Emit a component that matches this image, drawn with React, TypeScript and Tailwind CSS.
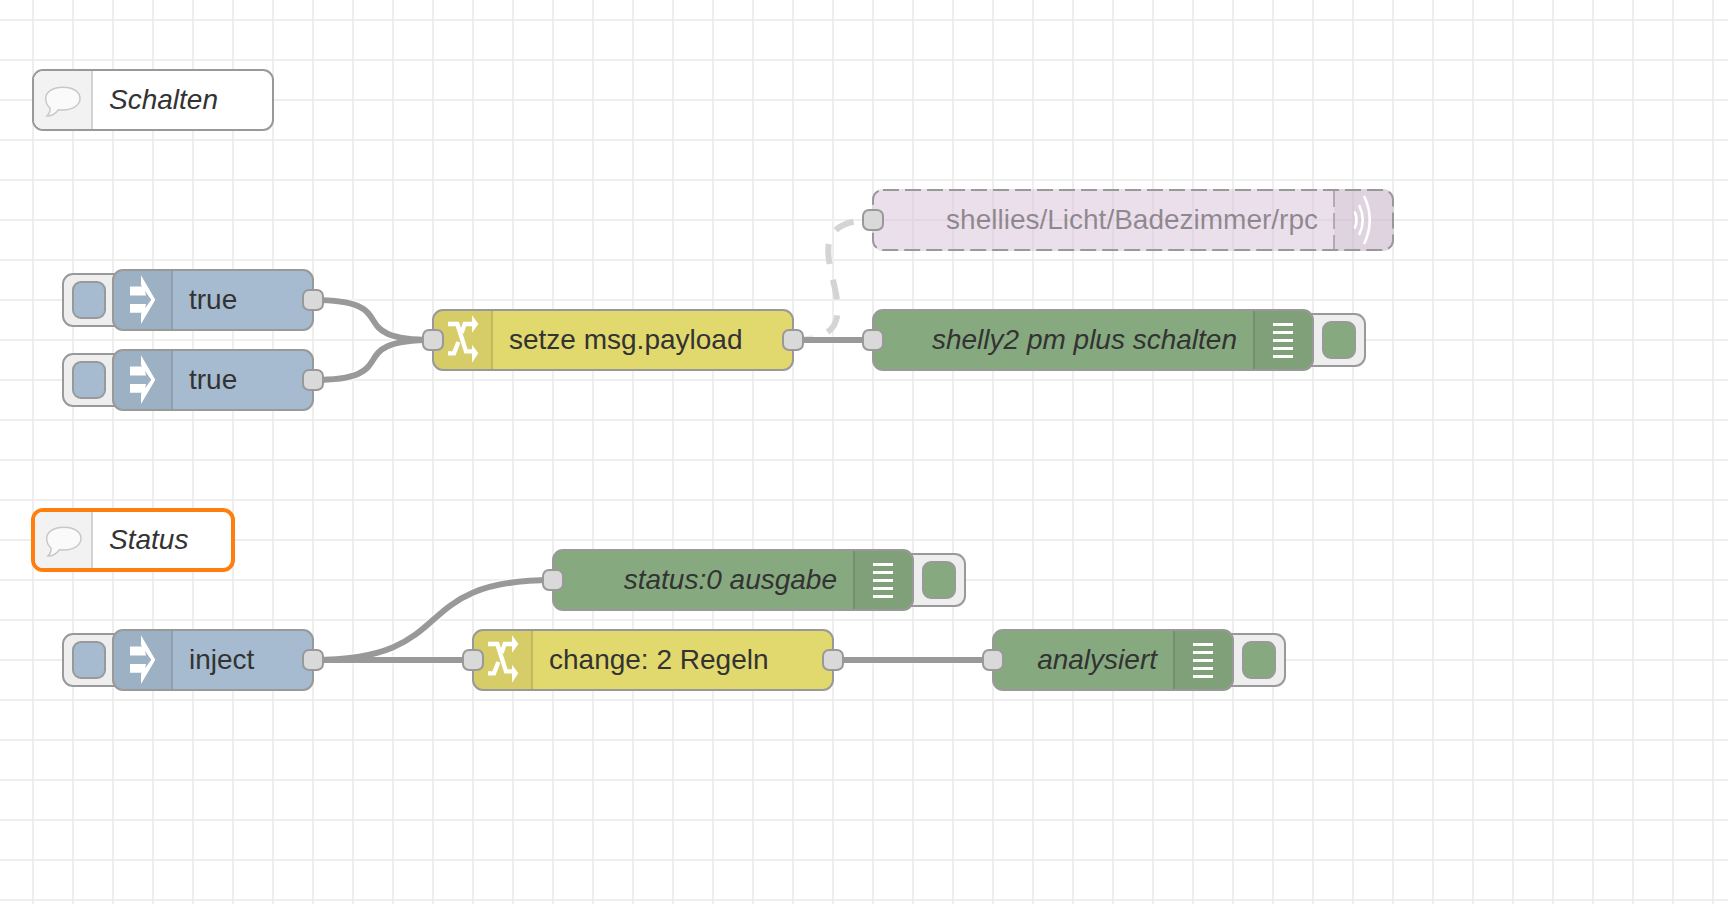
import React from "react";

function Port({ side }: { side: "left" | "right" }) {
  return (
    <div
      className={
        "absolute top-[18px] h-[22px] w-[22px] rounded-[7px] border-2 border-[#999] bg-[#d9d9d9] " +
        (side === "left" ? "left-[-12px]" : "right-[-12px]")
      }
    />
  );
}

function InjectIcon() {
  return (
    <svg viewBox="0 0 57 58" className="h-[58px] w-[57px] shrink-0" fill="#fff">
      <polygon points="27,4.3 41.3,28.7 27,53 27,42.7 37.3,28.7 27,14.3" />
      <polygon points="16,15.5 30,15.5 32,24.5 16,24.5" />
      <polygon points="16,33 32,33 30,41.7 16,41.7" />
    </svg>
  );
}

function ChangeIcon() {
  return (
    <svg viewBox="-24 -3 171 174" className="h-[58px] w-[57px] shrink-0" fill="none" stroke="#fff" strokeWidth="13">
      <path d="M18 36 H46 L72 118 H92" />
      <path d="M18 124 H36 L49 90" />
      <path d="M59 62 L68 36 H92" />
      <polygon points="90,10 109,36 90,62" fill="#fff" stroke="none" />
      <polygon points="90,98 109,124 90,152" fill="#fff" stroke="none" />
    </svg>
  );
}

function CommentIcon() {
  return (
    <svg viewBox="0 0 57 58" className="h-[58px] w-[57px] shrink-0" fill="#fafafa" stroke="#c8c8c8" strokeWidth="1.5">
      <path d="M16 37 C13.5 35 11.7 31 11.7 27.6 C11.7 21 19 16.3 29 16.3 C39 16.3 46 21 46 27.6 C46 34 39 39 29 39 C27.5 39 26 39 24.5 38.7 C22 42 18 45 13 45 C15 43 16.5 40 16 37 Z" />
    </svg>
  );
}

function DebugIcon() {
  return (
    <div className="mr-[1px] flex w-[20px] flex-col gap-[5px]">
      <div className="h-[3px] bg-white" />
      <div className="h-[3px] bg-white" />
      <div className="h-[3px] bg-white" />
      <div className="h-[3px] bg-white" />
      <div className="h-[3px] bg-white" />
    </div>
  );
}

function Comment({ className, label, selected }: { className: string; label: string; selected?: boolean }) {
  return (
    <div
      className={
        "absolute flex items-center bg-white italic " +
        (selected ? "rounded-[12px] border-4 border-[#ff7f0e] " : "rounded-[11px] border-2 border-[#999] ") +
        className
      }
    >
      <div
        className={
          "flex h-full items-center justify-center border-r-2 border-[#d2d2d2] bg-[#f2f2f2] " +
          (selected ? "w-[58px] rounded-l-[8px]" : "w-[59px] rounded-l-[9px]")
        }
      >
        <CommentIcon />
      </div>
      <span className="pl-[16px] text-[28px] leading-none whitespace-nowrap text-[#333]">{label}</span>
    </div>
  );
}

function LeftNode({ className, fill, icon, label, input }: { className: string; fill: string; icon: React.ReactNode; label: string; input?: boolean }) {
  return (
    <div className={"absolute flex items-center rounded-[11px] border-2 border-[#999] " + fill + " " + className}>
      <div className="flex h-full w-[59px] items-center justify-center rounded-l-[9px] border-r-2 border-black/10 bg-black/5">
        {icon}
      </div>
      <span className="pl-[16px] text-[28px] leading-none whitespace-nowrap text-[#333]">{label}</span>
      {input && <Port side="left" />}
      <Port side="right" />
    </div>
  );
}

function DebugNode({ className, label }: { className: string; label: string }) {
  return (
    <div className={"absolute flex items-center justify-end rounded-[11px] border-2 border-[#999] bg-[#87a980] " + className}>
      <span className="pr-[16px] text-[28px] leading-none whitespace-nowrap text-[#333] italic">{label}</span>
      <div className="flex h-full w-[59px] items-center justify-center rounded-r-[9px] border-l-2 border-black/10 bg-black/5">
        <DebugIcon />
      </div>
      <Port side="left" />
    </div>
  );
}

function Button({ outer, inner, fill }: { outer: string; inner: string; fill: string }) {
  return (
    <>
      <div className={"absolute rounded-[11px] border-2 border-[#999] bg-[#eee] " + outer} />
      <div className={"absolute rounded-[9px] border-2 border-[#999] " + fill + " " + inner} />
    </>
  );
}

export default function App() {
  return (
    <div className="relative h-[904px] w-[1728px] overflow-hidden bg-white bg-[linear-gradient(#eee_2px,transparent_2px),linear-gradient(90deg,#eee_2px,transparent_2px)] bg-[size:40px_40px] bg-[position:32px_19px] font-['Liberation_Sans',Arial,sans-serif]">
      {/* wires */}
      <svg viewBox="0 0 1728 904" className="absolute top-0 left-0 h-[904px] w-[1728px]" fill="none">
        <path d="M793 340 C901 340 765 220 873 220" stroke="#d4d4d4" strokeWidth="6" strokeDasharray="20 16" />
        <g stroke="#fff" strokeOpacity="0.4" strokeWidth="10">
          <path d="M313 300 C408 300 338 340 433 340" />
          <path d="M313 380 C408 380 338 340 433 340" />
          <path d="M793 340 H873" />
          <path d="M313 660 C463 660 403 580 553 580" />
          <path d="M313 660 H473" />
          <path d="M833 660 H993" />
        </g>
        <g stroke="#999" strokeWidth="6">
          <path d="M313 300 C408 300 338 340 433 340" />
          <path d="M313 380 C408 380 338 340 433 340" />
          <path d="M793 340 H873" />
          <path d="M313 660 C463 660 403 580 553 580" />
          <path d="M313 660 H473" />
          <path d="M833 660 H993" />
        </g>
      </svg>

      <Comment className="left-[32px] top-[69px] h-[62px] w-[242px]" label="Schalten" />
      <Comment className="left-[31px] top-[508px] h-[64px] w-[204px]" label="Status" selected />

      {/* inject nodes */}
      <Button outer="left-[62px] top-[273px] h-[54px] w-[66px]" inner="left-[72px] top-[281px] h-[38px] w-[34px]" fill="bg-[#a6bbcf]" />
      <LeftNode className="left-[112px] top-[269px] h-[62px] w-[202px]" fill="bg-[#a6bbcf]" icon={<InjectIcon />} label="true" />
      <Button outer="left-[62px] top-[353px] h-[54px] w-[66px]" inner="left-[72px] top-[361px] h-[38px] w-[34px]" fill="bg-[#a6bbcf]" />
      <LeftNode className="left-[112px] top-[349px] h-[62px] w-[202px]" fill="bg-[#a6bbcf]" icon={<InjectIcon />} label="true" />
      <Button outer="left-[62px] top-[633px] h-[54px] w-[66px]" inner="left-[72px] top-[641px] h-[38px] w-[34px]" fill="bg-[#a6bbcf]" />
      <LeftNode className="left-[112px] top-[629px] h-[62px] w-[202px]" fill="bg-[#a6bbcf]" icon={<InjectIcon />} label="inject" />

      {/* change nodes */}
      <LeftNode className="left-[432px] top-[309px] h-[62px] w-[362px]" fill="bg-[#e2d96e]" icon={<ChangeIcon />} label="setze msg.payload" input />
      <LeftNode className="left-[472px] top-[629px] h-[62px] w-[362px]" fill="bg-[#e2d96e]" icon={<ChangeIcon />} label="change: 2 Regeln" input />

      {/* disabled mqtt out */}
      <div className="absolute left-[872px] top-[189px] flex h-[62px] w-[522px] items-center justify-end rounded-[11px] bg-[#d8bfd8]/50">
        <span className="pr-[16px] text-[28px] leading-none whitespace-nowrap text-[#333]/50">shellies/Licht/Badezimmer/rpc</span>
        <div className="flex h-[62px] w-[60px] items-center justify-center rounded-r-[11px] bg-black/5">
          <svg viewBox="0 0 60 62" className="h-[62px] w-[60px]" fill="none" stroke="#fff" strokeWidth="2.6" strokeLinecap="round">
            <path d="M21 23.5 Q24 31 21 38.5" />
            <path d="M25.5 17 Q32 31 25.5 45" />
            <path d="M30.5 8 Q41 31 30.5 54" />
          </svg>
        </div>
        <svg viewBox="0 0 522 62" className="absolute top-0 left-0 h-[62px] w-[522px]" fill="none">
          <rect x="1" y="1" width="520" height="60" rx="10" stroke="#999" strokeWidth="2" strokeDasharray="16 6" />
          <path d="M462 2 V60" stroke="#b5a9b5" strokeWidth="2" strokeDasharray="16 6" />
        </svg>
        <div className="absolute left-[-10px] top-[20px] h-[22px] w-[22px] rounded-[7px] border-2 border-[#999] bg-[#d9d9d9]" />
      </div>

      {/* debug nodes */}
      <Button outer="left-[1300px] top-[313px] h-[54px] w-[66px]" inner="left-[1322px] top-[321px] h-[38px] w-[34px]" fill="bg-[#87a980]" />
      <DebugNode className="left-[872px] top-[309px] h-[62px] w-[442px]" label="shelly2 pm plus schalten" />
      <Button outer="left-[900px] top-[553px] h-[54px] w-[66px]" inner="left-[922px] top-[561px] h-[38px] w-[34px]" fill="bg-[#87a980]" />
      <DebugNode className="left-[552px] top-[549px] h-[62px] w-[362px]" label="status:0 ausgabe" />
      <Button outer="left-[1220px] top-[633px] h-[54px] w-[66px]" inner="left-[1242px] top-[641px] h-[38px] w-[34px]" fill="bg-[#87a980]" />
      <DebugNode className="left-[992px] top-[629px] h-[62px] w-[242px]" label="analysiert" />
    </div>
  );
}
